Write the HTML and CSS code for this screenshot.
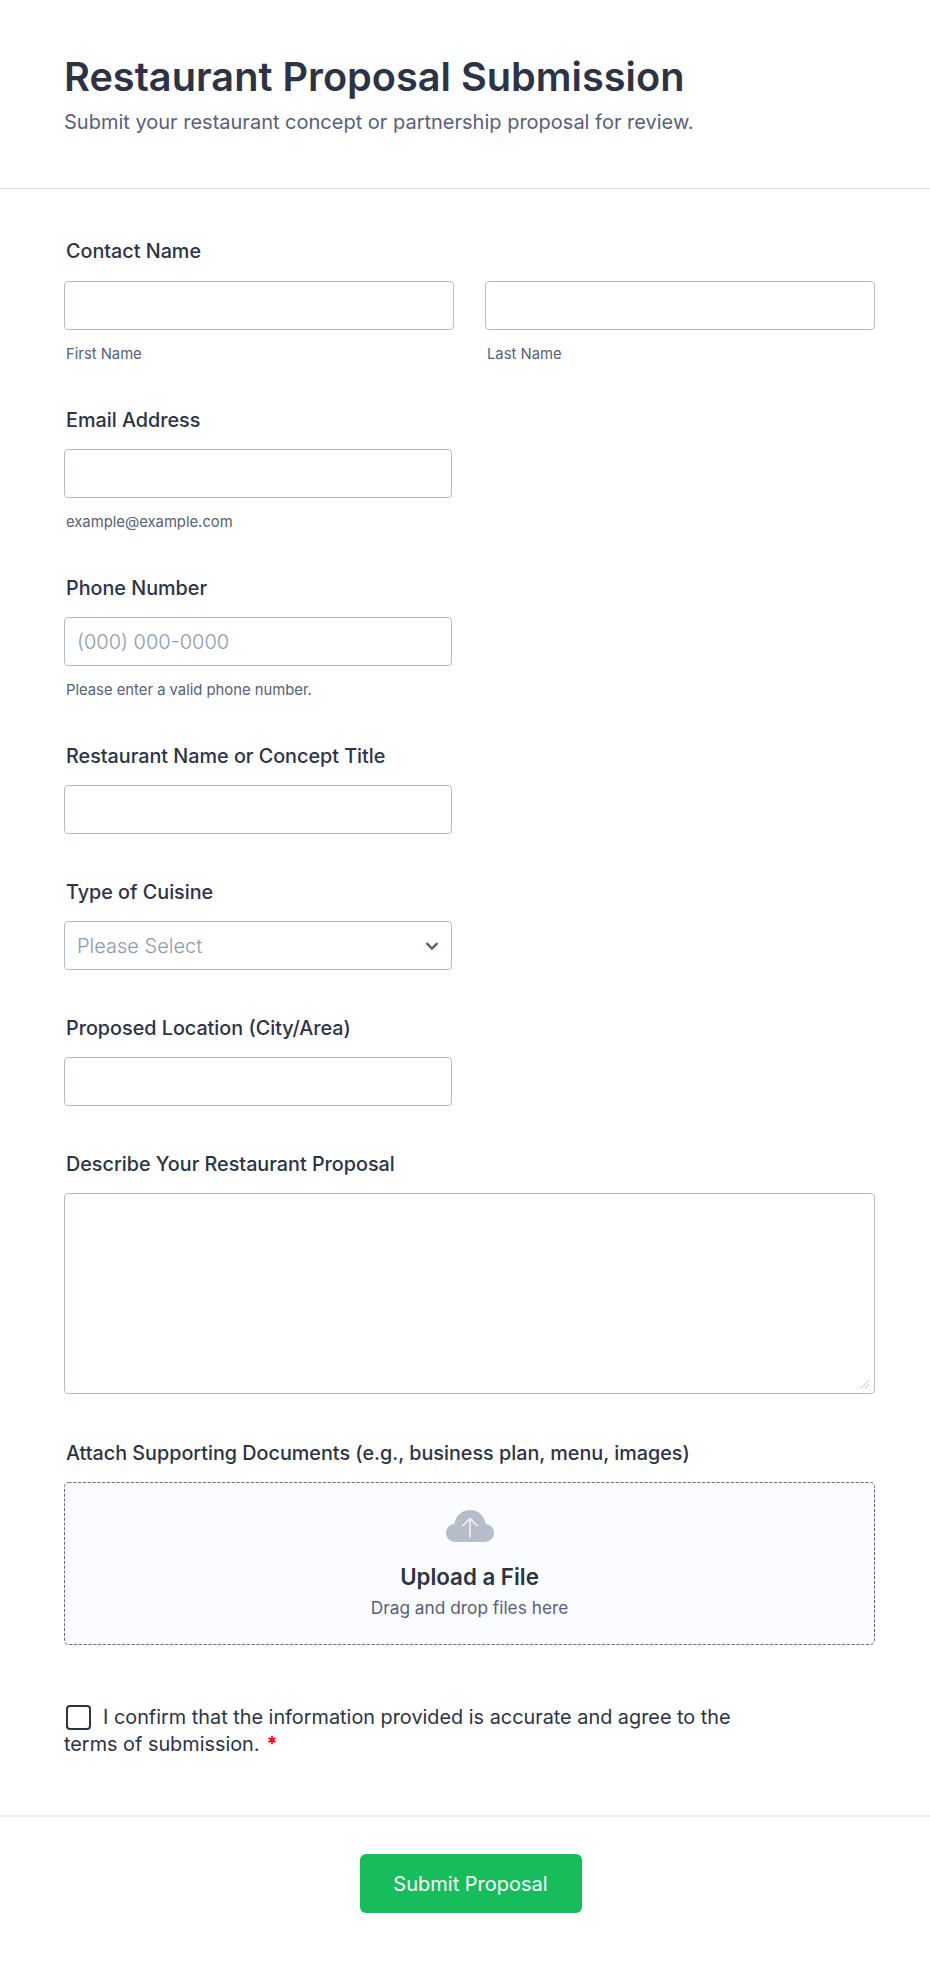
FILE: index.html
```html
<!DOCTYPE html>
<html lang="en">
<head>
<meta charset="utf-8">
<title>Restaurant Proposal Submission</title>
<link rel="stylesheet" href="styles.css">
</head>
<body>
<form class="form">
  <header class="header">
    <h1 class="title">Restaurant Proposal Submission</h1>
    <p class="subtitle">Submit your restaurant concept or partnership proposal for review.</p>
  </header>
  <div class="fields">
    <div class="field with-sub">
      <label class="label">Contact Name</label>
      <div class="name-row">
        <div class="name-col">
          <input class="input" type="text">
          <span class="sub">First Name</span>
        </div>
        <div class="name-col">
          <input class="input" type="text">
          <span class="sub">Last Name</span>
        </div>
      </div>
    </div>
    <div class="field with-sub">
      <label class="label">Email Address</label>
      <input class="input narrow" type="text">
      <span class="sub">example@example.com</span>
    </div>
    <div class="field with-sub">
      <label class="label">Phone Number</label>
      <input class="input narrow" type="text" placeholder="(000) 000-0000">
      <span class="sub">Please enter a valid phone number.</span>
    </div>
    <div class="field">
      <label class="label">Restaurant Name or Concept Title</label>
      <input class="input narrow" type="text">
    </div>
    <div class="field">
      <label class="label">Type of Cuisine</label>
      <div class="input narrow select">
        <span class="placeholder">Please Select</span>
        <svg class="chevron" width="14" height="10" viewBox="0 0 14 10" aria-hidden="true"><path d="M1.500 2 7 7.500 12.500 2" fill="none" stroke="#565d78" stroke-width="2.400"/></svg>
      </div>
    </div>
    <div class="field">
      <label class="label">Proposed Location (City/Area)</label>
      <input class="input narrow" type="text">
    </div>
    <div class="field area-field">
      <label class="label">Describe Your Restaurant Proposal</label>
      <div class="area-wrap">
        <textarea class="input area"></textarea>
        <svg class="grip" width="9" height="10" viewBox="0 0 9 10" aria-hidden="true"><path d="M0 9 8 1M4 9 8 5" fill="none" stroke="#c3c7d3" stroke-width="1"/></svg>
      </div>
    </div>
    <div class="field upload-field">
      <label class="label">Attach Supporting Documents (e.g., business plan, menu, images)</label>
      <div class="upload">
        <svg class="dash" width="811" height="163" viewBox="0 0 811 163" aria-hidden="true"><rect x="0.500" y="0.500" width="810" height="162" rx="4" fill="none" stroke="#666b82" stroke-width="1" stroke-dasharray="3.200 1.600"/></svg>
        <svg class="cloud" width="48" height="32" viewBox="0 0 48 32" aria-hidden="true">
          <defs>
            <pattern id="dots" width="5" height="5" patternUnits="userSpaceOnUse"><rect x="2" y="2" width="1" height="1" fill="#9db2d6"/></pattern>
          </defs>
          <path d="M10 32C4.500 32 0 28.300 0 23 0 18.100 3.600 14.500 8.300 14.100 9.600 6 15.900 0 24 0s14.400 6 15.700 14.100C44.400 14.500 48 18.100 48 23c0 5.300-4.500 9-10 9z" fill="#b8bdcb"/>
          <path d="M10 32C4.500 32 0 28.300 0 23 0 18.100 3.600 14.500 8.300 14.100 9.600 6 15.900 0 24 0s14.400 6 15.700 14.100C44.400 14.500 48 18.100 48 23c0 5.300-4.500 9-10 9z" fill="url(#dots)"/>
          <path d="M24 27.500V8.500M16.500 16 24 8.500 31.500 16" fill="none" stroke="#f3f4f8" stroke-width="1.500"/>
        </svg>
        <div class="upload-title">Upload a File</div>
        <div class="upload-text">Drag and drop files here</div>
      </div>
    </div>
    <div class="confirm">
      <span class="box"></span><span class="confirm-text">I confirm that the information provided is accurate and agree to the terms of submission.<span class="req">*</span></span>
    </div>
  </div>
  <footer class="footer">
    <button class="submit" type="button">Submit Proposal</button>
  </footer>
</form>
</body>
</html>
```
FILE: styles.css
```css
* { box-sizing: border-box; }
html, body { margin: 0; background: #fff; }
body { font-family: Inter, "Liberation Sans", sans-serif; color: #2c3345; }
.form { width: 930px; height: 1963px; display: flex; flex-direction: column; }
.header { height: 189px; padding: 53px 64px 0; border-bottom: 1px solid #dadce6; }
.title { margin: 0; font-size: 39.700px; line-height: 48px; font-weight: 600; color: #2c3345; }
.subtitle { margin: 7px 0 0; font-size: 20px; line-height: 28px; color: #57607a; }
.fields { padding: 48px 55px 0 64px; flex: 1; }
.field { margin-bottom: 44px; display: flex; flex-direction: column; align-items: flex-start; }
.field.with-sub { margin-bottom: 42px; }
.area-field { margin-bottom: 45px; }
.label { display: block; margin: 0 0 15px 2px; font-size: 19.750px; line-height: 28px; font-weight: 500; color: #2c3345; height: 28px; }
.field:first-child .label { margin-bottom: 16px; }
.name-row { display: flex; gap: 31px; width: 100%; }
.name-col { flex: 1; display: flex; flex-direction: column; }
.input { display: block; width: 100%; height: 49px; border: 1px solid #b6bbc9; border-radius: 4px; background: #fff; padding: 0 12px; font: 300 20px Inter, sans-serif; color: #2c3345; outline: none; }
.input::placeholder, .placeholder { color: #8d9bb0; }
.narrow { width: 388px; }
.select { display: flex; align-items: center; justify-content: space-between; }
.area-wrap { position: relative; width: 100%; }
.area { height: 201px; resize: none; width: 100%; padding: 12px; }
.grip { position: absolute; right: 5px; bottom: 5px; }
.sub { display: block; margin: 14px 0 0 2px; font-size: 14.800px; line-height: 20px; color: #57607a; }
.upload { position: relative; width: 100%; height: 163px; border-radius: 4px; background: #fbfcff; display: flex; flex-direction: column; align-items: center; padding-top: 28px; }
.dash { position: absolute; left: 0; top: 0; }
.cloud { display: block; }
.upload-title { margin-top: 21px; font-size: 22.300px; line-height: 28px; font-weight: 600; color: #2c3345; }
.upload-text { margin-top: 5px; font-size: 17.300px; line-height: 24px; color: #57607a; }
.upload-field { margin-bottom: 59px; }
.confirm { width: 700px; font-size: 19.850px; line-height: 27px; color: #2c3345; }
.box { display: inline-block; width: 25px; height: 25px; border: 2px solid #2c3345; border-radius: 4px; vertical-align: -6px; margin: 0 12px 0 2px; }
.req { color: #f00; font-weight: 700; margin-left: 7px; }
.footer { height: 148px; border-top: 2px solid #eeeef3; display: flex; justify-content: center; padding: 37px 0 0 11px; }
.submit { width: 222px; height: 59px; border: 0; border-radius: 6px; background: #18bd5b; color: #fff; font: 400 20px Inter, sans-serif; }
```
